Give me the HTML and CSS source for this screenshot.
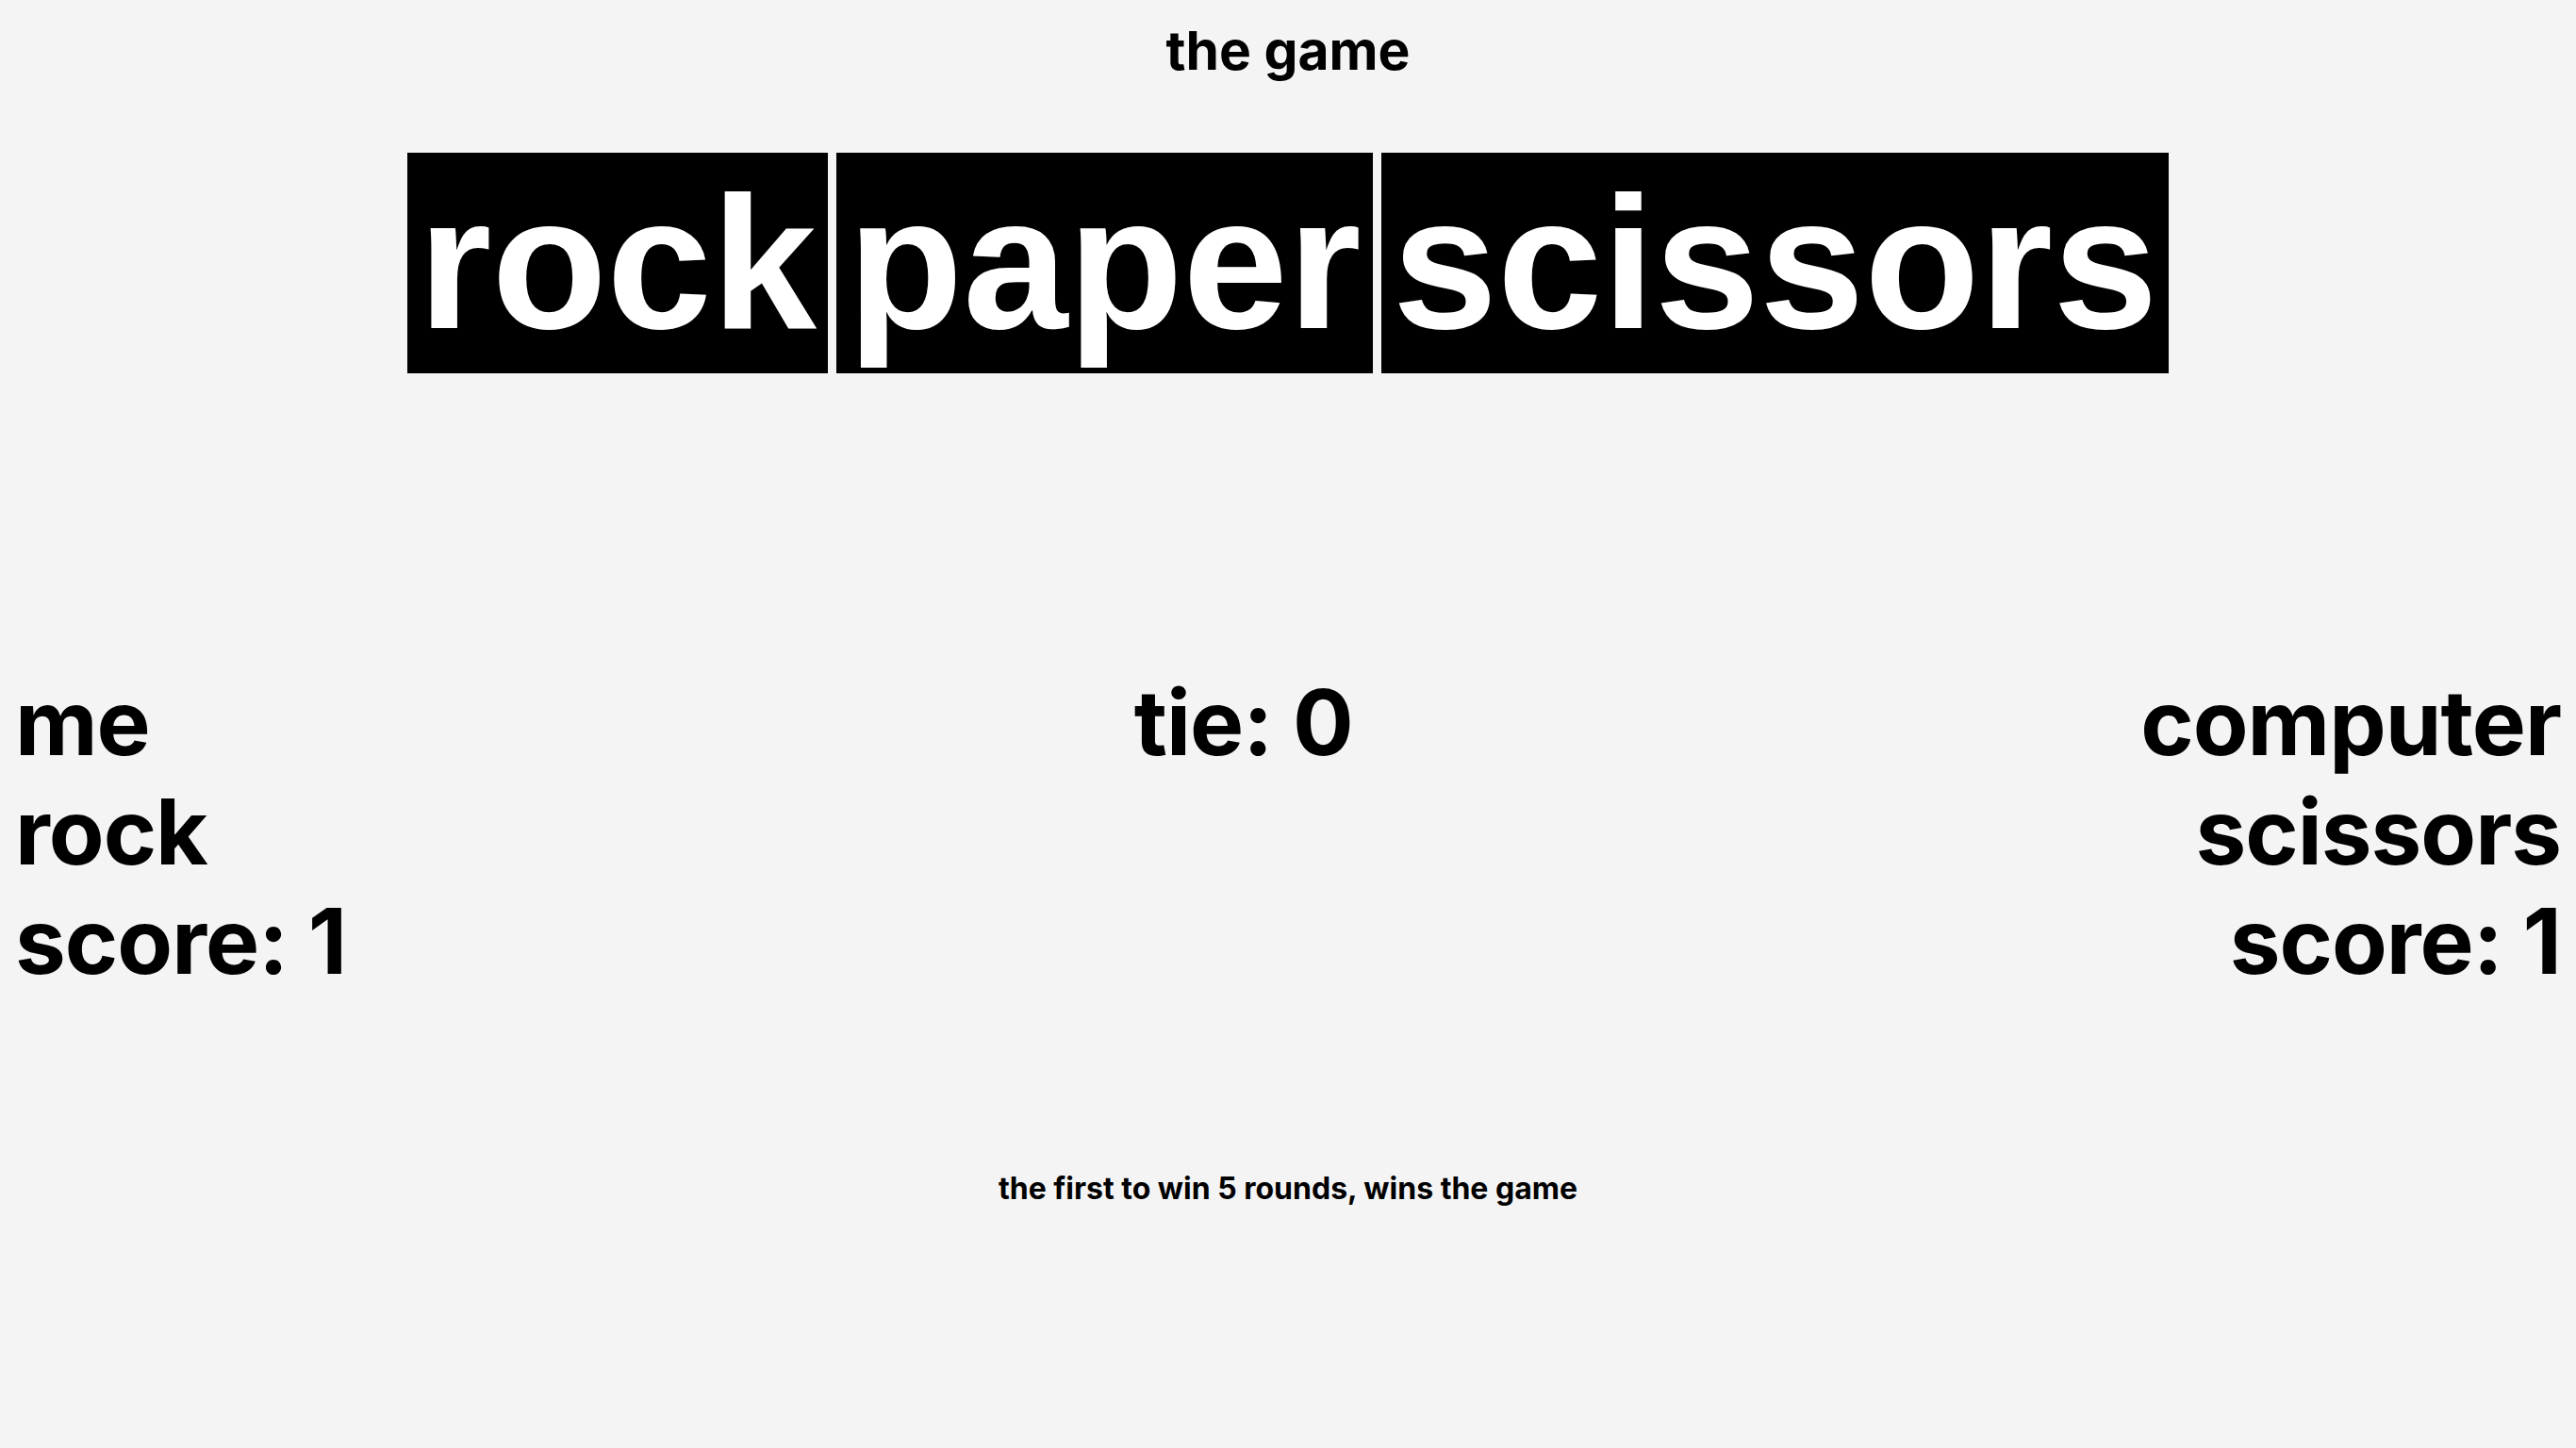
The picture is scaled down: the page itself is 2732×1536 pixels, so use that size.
FILE: index.html
```html
<!DOCTYPE html>
<html lang="en">
<head>
<meta charset="utf-8">
<title>rock paper scissors</title>
<link rel="stylesheet" href="styles.css">
</head>
<body>
<h1 class="title">the game</h1>
<div class="choices">
  <button class="choice">rock</button>
  <button class="choice">paper</button>
  <button class="choice">scissors</button>
</div>
<div class="board">
  <div class="player">
    <div>me</div>
    <div>rock</div>
    <div>score: 1</div>
  </div>
  <div class="tie">tie: 0</div>
  <div class="player player-right">
    <div>computer</div>
    <div>scissors</div>
    <div>score: 1</div>
  </div>
</div>
<p class="rules">the first to win 5 rounds, wins the game</p>
</body>
</html>
```
FILE: styles.css
```css
html, body {
  margin: 0;
  background: #f4f4f4;
}
body {
  padding: 20px 16px 0;
  font-family: Inter, "Noto Sans", sans-serif;
  color: #000;
}
.title {
  margin: 0;
  text-align: center;
  font-size: 57px;
  line-height: 68px;
  font-weight: 700;
}
.choices {
  display: flex;
  justify-content: center;
  gap: 9px;
  margin-top: 74px;
}
.choice {
  margin: 0;
  font-family: "Liberation Sans", Arial, sans-serif;
  font-weight: 700;
  font-size: 200px;
  line-height: 230px;
  color: #fff;
  background: #000;
  border: 2px solid #000;
  padding: 0 10px;
  border-radius: 0;
}
.board {
  display: flex;
  justify-content: space-between;
  align-items: flex-start;
  margin-top: 312px;
  font-size: 96px;
  font-weight: 700;
  line-height: 1.21;
  letter-spacing: -1px;
}
.player-right {
  text-align: right;
}
.rules {
  margin: 185px 0 0;
  text-align: center;
  font-size: 32px;
  font-weight: 700;
}
```
